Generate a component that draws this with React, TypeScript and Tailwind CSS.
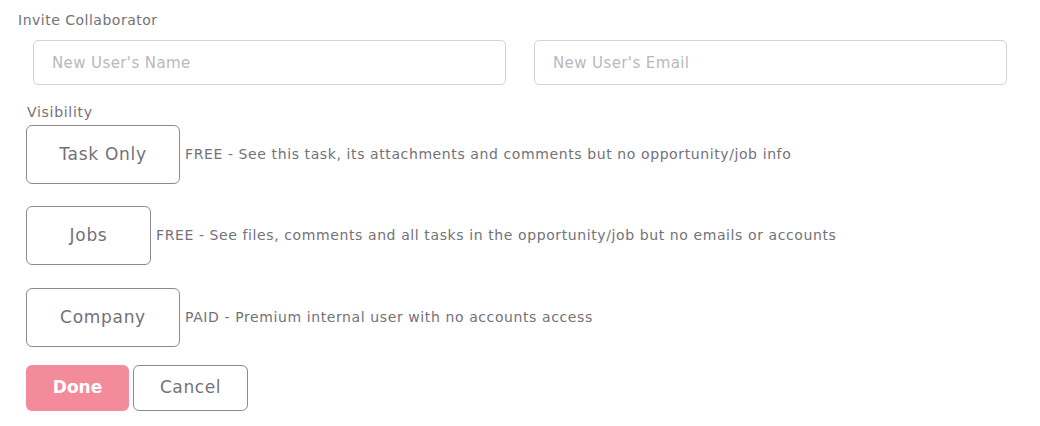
import React from "react";

const font = { fontFamily: '"DejaVu Sans", "Open Sans", sans-serif' };

function Option({ label, desc, w, mt }: { label: string; desc: string; w: string; mt: string }) {
  return (
    <div className={`flex items-center ${mt}`}>
      <div
        className={`${w} h-[59px] shrink-0 rounded-[6px] border border-[#8b8a92] flex items-center justify-center text-[17px] tracking-[0.7px] text-[#727179]`}
      >
        {label}
      </div>
      <div className="ml-[5px] text-[14px] tracking-[0.6px] text-[#737279]">{desc}</div>
    </div>
  );
}

export default function App() {
  return (
    <div className="w-[1040px] h-[426px] bg-white" style={font}>
      <div className="pl-[18px] pt-[11px] text-[14px] tracking-[0.5px] leading-[18px] text-[#737279]">Invite Collaborator</div>
      <div className="flex gap-[28px] pl-[33px] mt-[11px]">
        <input
          className="w-[473px] h-[45px] rounded-[5px] border border-[#d4d3da] px-[18px] text-[15px] tracking-[0.4px] placeholder:text-[#b9b8c0] outline-none"
          placeholder="New User's Name"
        />
        <input
          className="w-[473px] h-[45px] rounded-[5px] border border-[#d4d3da] px-[18px] text-[15px] tracking-[0.4px] placeholder:text-[#b9b8c0] outline-none"
          placeholder="New User's Email"
        />
      </div>
      <div className="pl-[27px] mt-[18px] text-[14px] tracking-[0.7px] leading-[18px] text-[#737279]">Visibility</div>
      <div className="pl-[26px] flex flex-col mt-[4px]">
        <Option mt="mt-0" label="Task Only" w="w-[154px]" desc="FREE - See this task, its attachments and comments but no opportunity/job info" />
        <Option mt="mt-[22px]" label="Jobs" w="w-[125px]" desc="FREE - See files, comments and all tasks in the opportunity/job but no emails or accounts" />
        <Option mt="mt-[23px]" label="Company" w="w-[154px]" desc="PAID - Premium internal user with no accounts access" />
      </div>
      <div className="pl-[26px] mt-[18px] flex gap-[4px]">
        <button className="w-[103px] h-[46px] rounded-[6px] bg-[#f48b9b] text-white text-[17px] font-semibold">Done</button>
        <button className="w-[115px] h-[46px] rounded-[6px] border border-[#8b8a92] text-[#737279] text-[17px] tracking-[0.6px]">Cancel</button>
      </div>
    </div>
  );
}
